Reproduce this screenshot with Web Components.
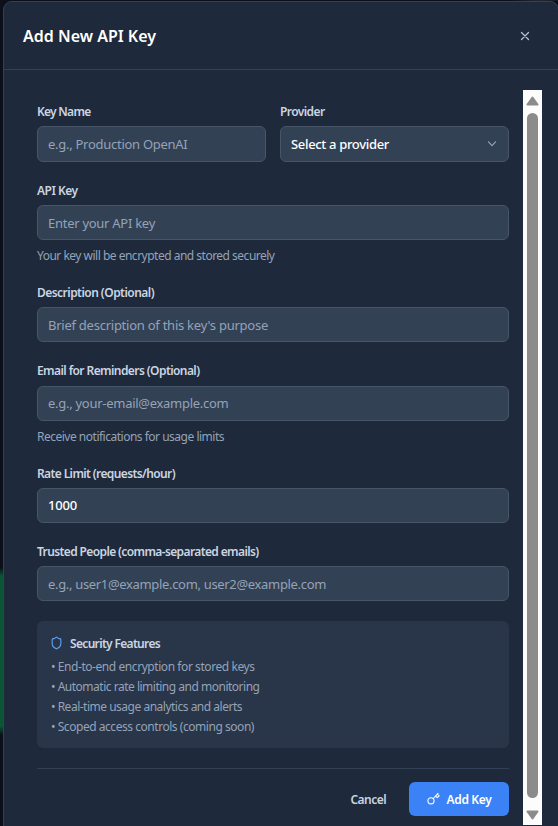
<!DOCTYPE html>
<html lang="en">
<head>
<meta charset="utf-8">
<title>Add New API Key</title>
<style>
html,body{margin:0;height:826px;overflow:hidden;background:#0b101b}
body{font-family:"Noto Sans","Open Sans",sans-serif;color:#fff}
</style>
</head>
<body>
<api-key-dialog></api-key-dialog>
<script>
const define = (name, html, setup) => customElements.define(name, class extends HTMLElement {
  connectedCallback() {
    if (this.shadowRoot) return;
    const t = document.createElement('template');
    t.innerHTML = html;
    this.attachShadow({mode: 'open'}).append(t.content.cloneNode(true));
    if (setup) setup(this, this.shadowRoot);
  }
});

/* A single line of text, tracked so that it spans the given width. */
define('tracked-text', `<style>
:host{display:inline-block;white-space:nowrap}
span{display:inline-block}
</style><span><slot></slot></span>`, (el, root) => {
  const span = root.querySelector('span');
  const target = +el.getAttribute('width');
  const n = el.textContent.length;
  span.style.letterSpacing = (target - span.getBoundingClientRect().width) / n + 'px';
});

define('form-field', `<style>
:host{display:flex;flex-direction:column;min-width:0}
.label{height:18px;line-height:18px;padding-top:1px;margin-bottom:5px;font-size:12px;font-weight:600;color:#cbd5e1;display:flex}
.box{height:var(--box-height,35px);box-sizing:border-box;border:1px solid #475569;border-radius:6px;background:#334155;
 padding:0 11px 0 10px;display:flex;align-items:center;justify-content:space-between;font-size:13px;line-height:20px;color:#94a3b8}
:host([filled]) .box{color:#fff;font-weight:500}
.help{display:flex;font-size:12px;line-height:18px;color:#94a3b8}
.help ::slotted(*){margin-top:7px}
</style>
<div class="label"><slot name="label"></slot></div>
<div class="box"><slot></slot><slot name="icon"></slot></div>
<div class="help"><slot name="help"></slot></div>`);

define('security-note', `<style>
:host{display:block;box-sizing:border-box;height:127px;padding:13px 14px;border-radius:6px;background:#293548;font-size:12px;color:#94a3b8}
.head{display:flex;align-items:center;height:20px;gap:7px;color:#cbd5e1;font-weight:600;margin-bottom:3px}
.head svg{margin-top:-3px;margin-left:-1px}
.head ::slotted(*){margin-top:-1px}
.list{display:flex;flex-direction:column}
::slotted([slot=item]){height:20px;line-height:20px}
</style>
<div class="head"><svg width="13" height="14" viewBox="0 0 24 24" preserveAspectRatio="none" fill="none" stroke="#60a5fa" stroke-width="2" stroke-linecap="round" stroke-linejoin="round"><path d="M20 13c0 5-3.5 7.500-7.660 8.950a1 1 0 0 1-.67-.01C7.500 20.500 4 18 4 13V6a1 1 0 0 1 1-1c2 0 4.500-1.200 6.240-2.720a1.170 1.170 0 0 1 1.520 0C14.510 3.810 17 5 19 5a1 1 0 0 1 1 1z"/></svg><slot name="title"></slot></div>
<div class="list"><slot name="item"></slot></div>`);

define('action-button', `<style>
:host{display:flex;align-items:center;justify-content:center;box-sizing:border-box;height:34px;border-radius:6px;font-size:12px;font-weight:600;color:#cbd5e1;gap:7px}
:host([primary]){width:100px;background:#3b82f6;color:#fff}
</style><slot name="icon"></slot><slot></slot>`);

define('scroll-rail', `<style>
:host{display:flex;flex-direction:column;align-items:center;width:19px;box-sizing:border-box;background:#fcfcfc;padding:6px 0 5px}
i{flex:1;width:11px;border-radius:6px;background:#8b8b8b;margin:7px 0 12px}
svg{display:block}
</style>
<svg width="13" height="10"><path d="M6.500 1.500L11.500 8.500H1.500Z" fill="#8b8b8b" stroke="#8b8b8b" stroke-width="2" stroke-linejoin="round"/></svg><i></i><svg width="13" height="10"><path d="M6.500 8.500L1.500 1.500H11.500Z" fill="#8b8b8b" stroke="#8b8b8b" stroke-width="2" stroke-linejoin="round"/></svg>`);

define('api-key-dialog', `<style>
:host{display:block;box-sizing:border-box;height:826px;padding:1px 0 0 3px;
 background:radial-gradient(ellipse 30px 2px at 540px 0,#2b2c35,transparent),
 linear-gradient(#0000 568px,#0b5536 576px,#0b5536 726px,#0000 735px) 0 0/4px 100% no-repeat,#0b101b}
.panel{box-sizing:border-box;width:556px;height:840px;border:1px solid #334155;border-radius:9px;background:#1e293b;display:flex;flex-direction:column}
header{box-sizing:border-box;height:68px;border-bottom:1px solid #334155;display:flex;align-items:center;justify-content:space-between;padding:1px 28px 0 19px;font-size:16px;font-weight:600;line-height:24px;flex:none}
.body{display:flex;height:735px;margin-top:20px;padding-left:33px;gap:14px}
form{width:472px;padding-top:12px;display:flex;flex-direction:column;flex:none}
.pair{display:grid;grid-template-columns:1fr 1fr;gap:14px;--box-height:36px}
.s18{margin-top:18px}.s19{margin-top:19px}.s20{margin-top:20px}
footer{margin-top:20px;border-top:1px solid #334155;padding-top:13px;display:flex;justify-content:flex-end;gap:23px}
.sel{color:#fff;font-weight:500}
.raised{margin-top:-2px}
</style>
<section class="panel">
<header><tracked-text width="133">Add New API Key</tracked-text>
<svg width="10" height="10" viewBox="0 0 10 10" stroke="#b8c2d0" stroke-width="1.300" stroke-linecap="round"><path d="M1.500 1.500L8.500 8.500M8.500 1.500L1.500 8.500"/></svg></header>
<div class="body">
<form>
<div class="pair">
<form-field><tracked-text slot="label" width="53.500">Key Name</tracked-text><tracked-text width="139.500">e.g., Production OpenAI</tracked-text></form-field>
<form-field><tracked-text slot="label" width="44.500">Provider</tracked-text><tracked-text class="sel" width="98">Select a provider</tracked-text>
<svg slot="icon" width="10" height="6" viewBox="0 0 10 6" fill="none" stroke="#94a3b8" stroke-width="1.200" stroke-linecap="round" stroke-linejoin="round"><path d="M1.500 .8L5 4.600L8.500 .8"/></svg></form-field>
</div>
<form-field class="s19"><tracked-text slot="label" width="40.500">API Key</tracked-text><tracked-text width="107">Enter your API key</tracked-text><tracked-text slot="help" width="237.500">Your key will be encrypted and stored securely</tracked-text></form-field>
<form-field class="s18"><tracked-text slot="label" width="117">Description (Optional)</tracked-text><tracked-text width="220">Brief description of this key's purpose</tracked-text></form-field>
<form-field class="s20"><tracked-text slot="label" width="162.500" style="margin-top:-1px">Email for Reminders (Optional)</tracked-text><tracked-text class="raised" width="180.500">e.g., your-email@example.com</tracked-text><tracked-text slot="help" width="187">Receive notifications for usage limits</tracked-text></form-field>
<form-field class="s18" filled><tracked-text slot="label" width="138">Rate Limit (requests/hour)</tracked-text><tracked-text class="raised" width="29">1000</tracked-text></form-field>
<form-field class="s19"><tracked-text slot="label" width="221.500">Trusted People (comma-separated emails)</tracked-text><tracked-text width="278">e.g., user1@example.com, user2@example.com</tracked-text></form-field>
<security-note class="s20"><tracked-text slot="title" width="90">Security Features</tracked-text>
<tracked-text slot="item" width="203.500">• End-to-end encryption for stored keys</tracked-text>
<tracked-text slot="item" width="208.500">• Automatic rate limiting and monitoring</tracked-text>
<tracked-text slot="item" width="191">• Real-time usage analytics and alerts</tracked-text>
<tracked-text slot="item" width="203">• Scoped access controls (coming soon)</tracked-text></security-note>
<footer><action-button><tracked-text width="35.500">Cancel</tracked-text></action-button>
<action-button primary><svg slot="icon" width="13" height="14" viewBox="0 0 13 14" fill="none" stroke="#fff" stroke-width="1.100" stroke-linecap="round" stroke-linejoin="round"><circle cx="4" cy="8.800" r="3.100"/><path d="M6.300 6.500L11 1.400M8.500 4L10.200 5.700L12.200 3.800L10.300 2.100"/></svg><tracked-text width="45">Add Key</tracked-text></action-button></footer>
</form>
<scroll-rail></scroll-rail>
</div>
</section>`);
</script>
</body>
</html>
